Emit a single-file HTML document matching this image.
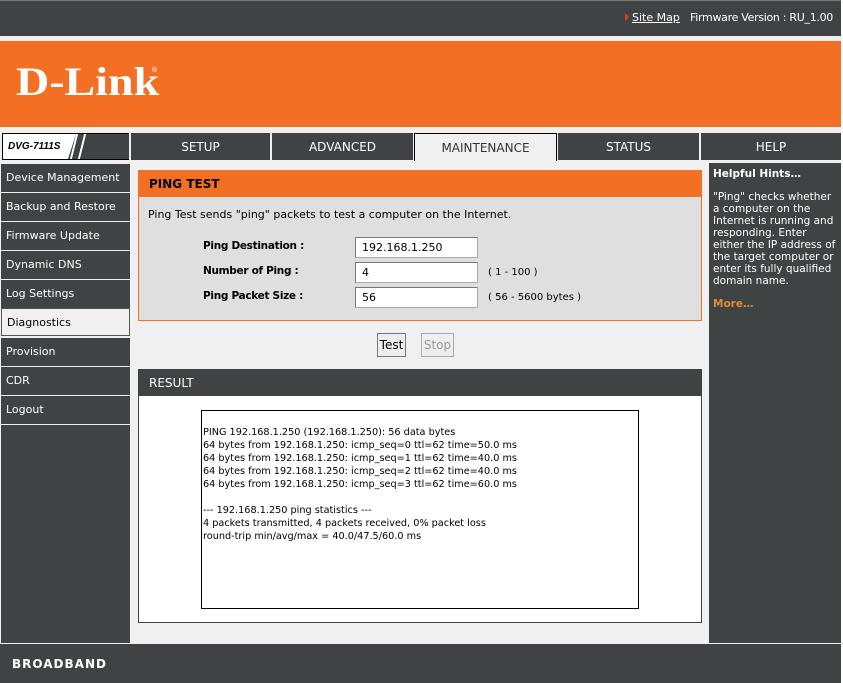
<!DOCTYPE html>
<html><head><style>
*{margin:0;padding:0;box-sizing:border-box}
body{width:843px;height:683px;background:#f0f0f0;font-family:"DejaVu Sans","Liberation Sans",sans-serif;position:relative;overflow:hidden;font-size:11px;color:#000}
.a{position:absolute;white-space:nowrap}
.dk{background:#404344}
.tab{position:absolute;top:133px;height:27px;background:#404344;color:#fff;font-size:12px;text-align:center;line-height:28px}
.nav{position:absolute;left:1px;width:129px;height:28px;background:#404344;color:#fff;font-size:11px;line-height:27px;padding-left:5px}
.lbl{position:absolute;left:203px;font-weight:bold;font-size:10.5px;letter-spacing:-0.3px}
.in{position:absolute;left:355px;width:123px;height:21px;background:#fff;border:1px solid #aaa;border-top-color:#777;border-left-color:#777;font-size:11px;line-height:19px;padding-left:6px}
.rng{position:absolute;left:488px;font-size:10px}
.btn{position:absolute;top:333px;height:24px;border:1px solid #777;background:#eee;font-size:12px;line-height:22px;text-align:center}
pre{font-family:"DejaVu Sans","Liberation Sans",sans-serif;font-size:9.7px;line-height:13px}
</style></head><body>
<div class="a dk" style="left:0;top:0;width:843px;height:36px;border-top:1px solid #777"></div>
<div class="a" style="left:625px;top:13px;width:0;height:0;border-top:4px solid transparent;border-bottom:4px solid transparent;border-left:4px solid #e04010"></div>
<div class="a" style="left:632px;top:11px;color:#fff;font-size:11px;text-decoration:underline">Site Map</div>
<div class="a" style="right:10px;top:11px;color:#fff;font-size:11px;letter-spacing:-0.3px">Firmware Version : RU_1.00</div>
<div class="a" style="left:0;top:41px;width:843px;height:86px;background:#f36f23"></div>
<div class="a" style="left:16px;top:58px;color:#fff;font-family:'Liberation Serif',serif;font-weight:bold;font-size:40px;transform:scaleX(1.15);transform-origin:left">D-Link</div>
<div class="a" style="left:151px;top:66px;color:#fff;font-size:7px">®</div>
<div class="a" style="left:2px;top:133px;width:127px;height:27px;background:#fff;border:1px solid #000"></div>
<div class="a" style="left:8px;top:141px;font-size:10px;font-weight:bold;font-style:italic;font-family:'Liberation Sans',sans-serif">DVG-7111S</div>
<div class="a dk" style="left:68px;top:134px;width:61px;height:25px;clip-path:polygon(8px 0,100% 0,100% 100%,0 100%)"></div>
<div class="a" style="left:73px;top:134px;width:2px;height:25px;background:#fff;transform:skewX(-14deg)"></div>
<div class="a" style="left:81px;top:134px;width:2px;height:25px;background:#fff;transform:skewX(-14deg)"></div>
<div class="tab" style="left:131px;width:139px">SETUP</div>
<div class="tab" style="left:272px;width:141px">ADVANCED</div>
<div class="tab" style="left:414px;width:143px;background:#f0f0f0;color:#333;border:1px solid #000;border-bottom:none;height:28px">MAINTENANCE</div>
<div class="tab" style="left:558px;width:141px">STATUS</div>
<div class="tab" style="left:701px;width:140px">HELP</div>
<div class="a dk" style="left:1px;top:425px;width:129px;height:218px"></div>
<div class="nav" style="top:164px">Device Management</div>
<div class="nav" style="top:193px">Backup and Restore</div>
<div class="nav" style="top:222px">Firmware Update</div>
<div class="nav" style="top:251px">Dynamic DNS</div>
<div class="nav" style="top:280px">Log Settings</div>
<div class="nav" style="top:308px;background:#f0f0f0;color:#000;border:1px solid #555">Diagnostics</div>
<div class="nav" style="top:338px">Provision</div>
<div class="nav" style="top:367px">CDR</div>
<div class="nav" style="top:396px">Logout</div>
<div class="a" style="left:138px;top:170px;width:564px;height:151px;background:#dfdfdf;border:1px solid #f36f23"></div>
<div class="a" style="left:138px;top:170px;width:564px;height:27px;background:#f36f23"></div>
<div class="a" style="left:149px;top:177px;font-size:12px;font-weight:bold">PING TEST</div>
<div class="a" style="left:148px;top:208px;font-size:11px">Ping Test sends "ping" packets to test a computer on the Internet.</div>
<div class="lbl" style="top:240px">Ping Destination :</div>
<div class="lbl" style="top:265px">Number of Ping :</div>
<div class="lbl" style="top:290px">Ping Packet Size :</div>
<div class="in" style="top:237px">192.168.1.250</div>
<div class="in" style="top:262px">4</div>
<div class="in" style="top:287px">56</div>
<div class="rng" style="top:292px">( 56 - 5600 bytes )</div>
<div class="rng" style="top:267px">( 1 - 100 )</div>
<div class="btn" style="left:377px;width:29px">Test</div>
<div class="btn" style="left:421px;width:33px;color:#999;border-color:#aaa">Stop</div>
<div class="a dk" style="left:138px;top:369px;width:564px;height:27px"></div>
<div class="a" style="left:149px;top:376px;font-size:12px;color:#fff">RESULT</div>
<div class="a" style="left:138px;top:396px;width:564px;height:227px;background:#fff;border:1px solid #404344;border-top:none"></div>
<div class="a" style="left:201px;top:410px;width:438px;height:199px;border:1px solid #000;background:#fff;padding:15px 0 0 1px"><pre>PING 192.168.1.250 (192.168.1.250): 56 data bytes
64 bytes from 192.168.1.250: icmp_seq=0 ttl=62 time=50.0 ms
64 bytes from 192.168.1.250: icmp_seq=1 ttl=62 time=40.0 ms
64 bytes from 192.168.1.250: icmp_seq=2 ttl=62 time=40.0 ms
64 bytes from 192.168.1.250: icmp_seq=3 ttl=62 time=60.0 ms

--- 192.168.1.250 ping statistics ---
4 packets transmitted, 4 packets received, 0% packet loss
round-trip min/avg/max = 40.0/47.5/60.0 ms</pre></div>
<div class="a dk" style="left:709px;top:163px;width:132px;height:480px;color:#fff;padding:5px 4px;font-size:10.5px;line-height:12px;white-space:normal">
<div style="font-weight:bold;margin-bottom:11px">Helpful Hints…</div>
<div style="width:124px">"Ping" checks whether a computer on the Internet is running and responding. Enter either the IP address of the target computer or enter its fully qualified domain name.</div>
<div style="color:#e08a3a;font-weight:bold;margin-top:11px">More…</div></div>
<div class="a dk" style="left:0;top:644px;width:841px;height:39px"></div>
<div class="a" style="left:841px;top:0;width:2px;height:683px;background:#fff"></div>
<div class="a" style="left:12px;top:657px;color:#fff;font-size:12px;font-weight:bold;letter-spacing:1px">BROADBAND</div>
</body></html>
